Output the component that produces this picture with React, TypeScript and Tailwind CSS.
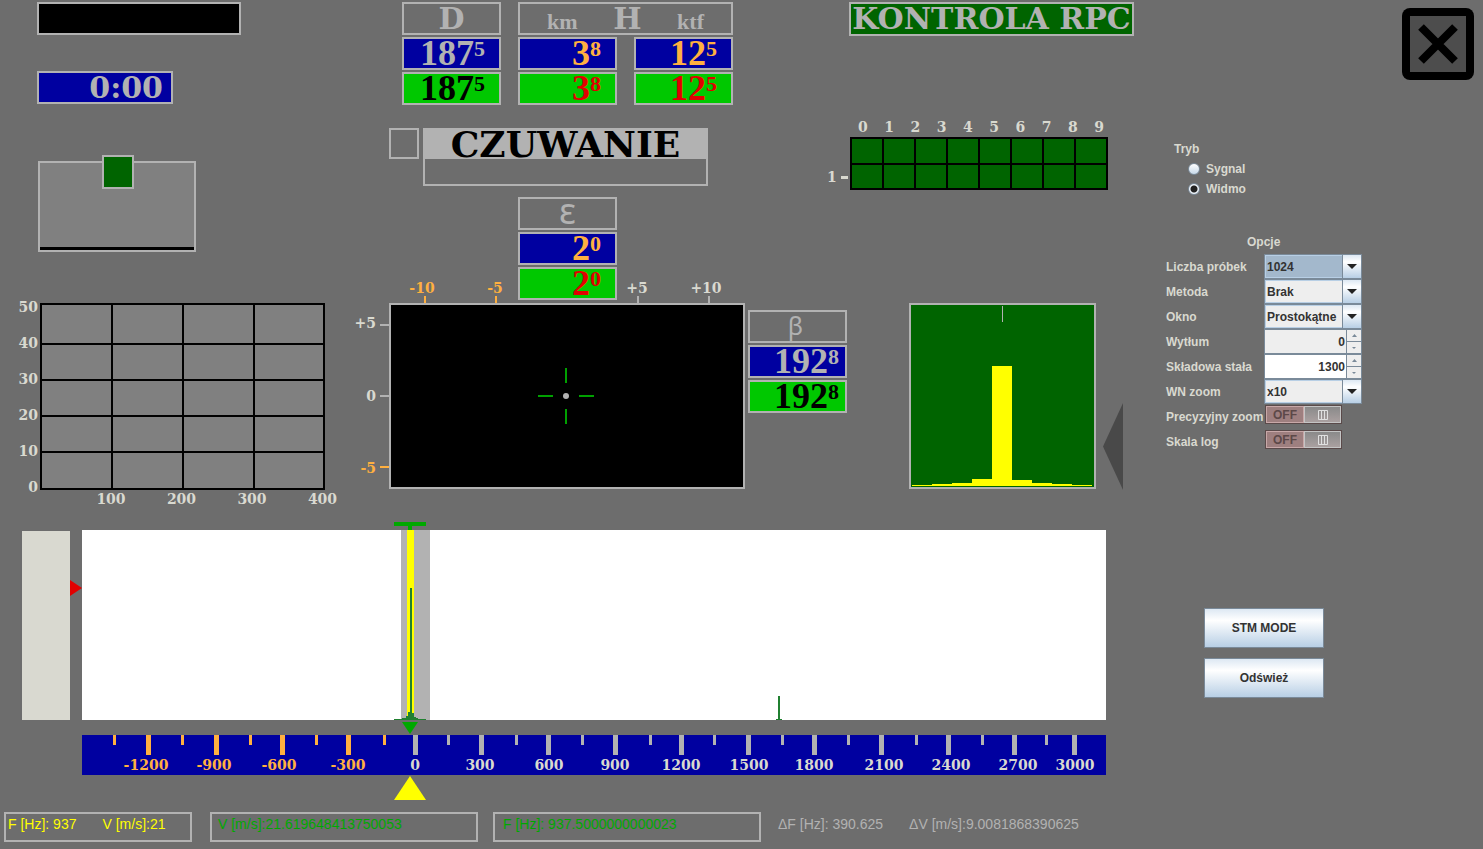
import React, { useState } from "react";

const display = "font-['DejaVu_Serif',serif] font-bold";
const digits = "font-['Liberation_Serif',serif] font-bold";

type Tone = "blueGray" | "blueOrange" | "greenBlack" | "greenRed";

const tones: Record<Tone, string> = {
  blueGray: "bg-[#0000a0] text-[#b2b2b2]",
  blueOrange: "bg-[#0000a0] text-[#ffb040]",
  greenBlack: "bg-[#00c800] text-black",
  greenRed: "bg-[#00c800] text-[#e10000]",
};

function Readout({ value, fraction, tone, pad = "pr-3.5" }: { value: string; fraction: string; tone: Tone; pad?: string }) {
  return (
    <div className={`${digits} ${tones[tone]} ${pad} flex h-[33px] w-[99px] items-start justify-end border-2 border-[#b2b2b2]`}>
      <span className="text-[36px] leading-[29px]">{value}</span>
      <span className="text-[22px] leading-5">{fraction}</span>
    </div>
  );
}

function Header({ children }: { children: React.ReactNode }) {
  return (
    <div className="flex h-[33px] w-[99px] items-start justify-center border-2 border-[#b2b2b2] text-[#b2b2b2]">
      {children}
    </div>
  );
}

function RangeChart() {
  return (
    <svg width="359" height="206" className={`${display} shrink-0 overflow-visible text-[14px]`} fill="#d9d9d0">
      <rect x="41" y="1" width="283" height="185" fill="#808080" stroke="#000" strokeWidth="2" />
      {[41, 77, 113, 149].map((y) => (
        <rect key={y} x="41" y={y - 1} width="283" height="2" fill="#000" />
      ))}
      {[112, 183, 254].map((x) => (
        <rect key={x} x={x - 1} y="1" width="2" height="185" fill="#000" />
      ))}
      {[50, 40, 30, 20, 10, 0].map((v, i) => (
        <text key={v} x="38" y={9 + i * 36} textAnchor="end">{v}</text>
      ))}
      {[100, 200, 300, 400].map((v, i) => (
        <text key={v} x={111 + i * 70.5} y="201" textAnchor="middle">{v}</text>
      ))}
    </svg>
  );
}

function Scope() {
  return (
    <svg width="388" height="186" className={`${display} shrink-0 overflow-visible text-[14px]`}>
      <text x="17" y="25" textAnchor="end" fill="#d9d9d0">+5</text>
      <text x="17" y="98" textAnchor="end" fill="#d9d9d0">0</text>
      <text x="17" y="170" textAnchor="end" fill="#ffb040">-5</text>
      <rect x="21" y="21" width="10" height="2" fill="#b2b2b2" />
      <rect x="21" y="92" width="10" height="2" fill="#b2b2b2" />
      <rect x="21" y="163" width="10" height="2" fill="#ffb040" />
      <rect x="31" y="1" width="354" height="184" fill="#000" stroke="#b2b2b2" strokeWidth="2" />
      <g fill="#00a000">
        <rect x="206" y="65" width="2" height="15" />
        <rect x="206" y="106" width="2" height="15" />
        <rect x="179" y="92" width="15" height="2" />
        <rect x="220" y="92" width="15" height="2" />
      </g>
      <circle cx="207" cy="93" r="3" fill="#b2b2b2" />
    </svg>
  );
}

function Histogram() {
  const bars = [1, 2, 3, 7, 120, 6, 3, 2, 1];
  return (
    <svg width="187" height="186" className="shrink-0" shapeRendering="crispEdges">
      <rect x="1" y="1" width="185" height="184" fill="#006400" stroke="#b2b2b2" strokeWidth="2" />
      <rect x="93" y="3" width="1" height="16" fill="#b2b2b2" />
      {bars.map((h, i) => (
        <rect key={i} x={3 + i * 20} y={183 - h} width="20" height={h} fill="#ff0" />
      ))}
    </svg>
  );
}

const major: [number, string, number][] = [
  [66, "-1200", 64], [134, "-900", 132], [200, "-600", 197], [266, "-300", 266],
  [333, "0", 333], [399, "300", 398], [466, "600", 467], [533, "900", 533],
  [599, "1200", 599], [666, "1500", 667], [732, "1800", 732], [799, "2100", 802],
  [866, "2400", 869], [932, "2700", 936], [992, "3000", 993],
];
const minor = [32, 100, 168, 234, 302, 366, 434, 500, 568, 632, 700, 766, 834, 900, 964];
const pct = (x: number) => `${(x / 1024) * 100}%`;

function Spectrum() {
  return (
    <svg height="280" className={`${display} w-0 min-w-0 flex-1 text-[14px]`}>
      <rect y="10" width="100%" height="190" fill="#fff" />
      <svg x={pct(312)} width="48" height="280" overflow="visible">
        <rect x="7" y="10" width="29" height="190" fill="#b2b2b2" />
        <rect x="13" y="10" width="7" height="190" fill="#ff0" />
        <rect x="0" y="2" width="32" height="4" fill="#00a800" />
        <rect x="14" y="6" width="4" height="4" fill="#00a800" />
        <path d="M16 68h2v125h2v4h2v1h2v1h8v1H0v-1h8v-1h4v-2h2v-4h2z" fill="#208030" />
        <path d="M8 202h16l-8 12z" fill="#00a800" />
      </svg>
      <rect x={pct(696)} y="176" width="2" height="24" fill="#208030" />
      <rect x={pct(694)} y="199" width="6" height="1" fill="#208030" />
      <rect y="215" width="100%" height="40" fill="#0000a0" />
      {minor.map((x) => (
        <rect key={x} x={pct(x - 1)} y="215" width="3" height="10" fill={x < 330 ? "#ffb040" : "#b2b2b2"} />
      ))}
      {major.map(([x, label, cx]) => (
        <g key={label}>
          <rect x={pct(x - 2)} y="215" width="5" height="20" fill={x < 330 ? "#ffb040" : "#b2b2b2"} />
          <text x={pct(cx)} y="250" textAnchor="middle" fill={x < 330 ? "#ffb040" : "#d9d9d0"}>{label}</text>
        </g>
      ))}
      <svg x={pct(312)} y="256" width="32" height="24">
        <path d="M16 0l16 24H0z" fill="#ff0" />
      </svg>
    </svg>
  );
}

function Combo({ id, options, active = false }: { id: string; options: string[]; active?: boolean }) {
  return (
    <div className="relative h-[25px] w-[98px]">
      <select
        id={id}
        className={`h-full w-full appearance-none rounded-none border border-[#7a8a99] pl-0.5 pr-5 text-xs font-bold text-[#333] outline-none ring-1 ring-inset ring-[#b8cfe5] ${active ? "bg-[#a3b8cc]" : "bg-[#eee]"}`}
      >
        {options.map((o) => (
          <option key={o}>{o}</option>
        ))}
      </select>
      <span className="pointer-events-none absolute inset-y-px right-px flex w-[19px] items-center justify-center border-l border-[#7a8a99] bg-linear-to-b from-[#dde8f3] via-white via-30% to-[#b8cfe5]">
        <svg width="10" height="5"><path d="M0 0h10L5 5z" fill="#222" /></svg>
      </span>
    </div>
  );
}

function Spinner({ id, initial, bg }: { id: string; initial: number; bg: string }) {
  const [value, setValue] = useState(initial);
  const step = "flex flex-1 items-center justify-center bg-[#eee]";
  return (
    <div className="flex h-[25px] w-[98px] border border-[#7a8a99] bg-[#7a8a99]">
      <input
        id={id}
        value={value}
        onChange={(e) => setValue(Number(e.target.value) || 0)}
        className={`w-0 min-w-0 flex-1 pr-px text-right text-xs font-bold text-[#333] outline-none ${bg}`}
      />
      <div className="ml-px flex w-3.5 flex-col gap-px">
        <button type="button" aria-label="+" className={step} onClick={() => setValue(value + 1)}>
          <svg width="5" height="3"><path d="M0 3h5L2.5 0z" fill="#7a8a99" /></svg>
        </button>
        <button type="button" aria-label="−" className={step} onClick={() => setValue(value - 1)}>
          <svg width="4" height="2"><path d="M0 0h4L2 2z" fill="#7a8a99" /></svg>
        </button>
      </div>
    </div>
  );
}

function Toggle({ id }: { id: string }) {
  const [on, setOn] = useState(false);
  return (
    <button
      id={id}
      type="button"
      role="switch"
      aria-checked={on}
      onClick={() => setOn(!on)}
      className={`mb-1 ml-px flex h-[19px] w-[77px] border border-[#5a4a4a] ${on ? "flex-row-reverse" : ""}`}
    >
      <span className="flex h-full w-[38px] items-center justify-center border border-[#c8a8a8] bg-[#9e7f7f] text-xs font-bold text-[#5c4848]">
        {on ? "ON" : "OFF"}
      </span>
      <span className="flex h-full flex-1 items-center justify-center border border-[#c4c4c4] bg-linear-to-b from-[#8a8a8a] to-[#aaa0a0]">
        <svg width="10" height="10" fill="none" stroke="#e0e0e0"><path d="M.5 .5h9v9h-9zM3.5 0v10M6.5 0v10" /></svg>
      </span>
    </button>
  );
}

function Row({ id, label, children }: { id: string; label: string; children: React.ReactNode }) {
  return (
    <div className="flex h-[25px] items-center">
      <label htmlFor={id} className="w-[98px] shrink-0 whitespace-nowrap">{label}</label>
      {children}
    </div>
  );
}

function Aside() {
  const [mode, setMode] = useState("Widmo");
  const action =
    "h-10 w-[120px] border border-[#7a8a99] bg-linear-to-b from-[#dde8f3] via-white via-30% to-[#b8cfe5] text-xs font-bold text-[#333]";
  return (
    <aside className="flex w-[343px] shrink-0 flex-col pt-2 font-['Liberation_Sans',sans-serif] text-xs font-bold text-[#d9d9d0]">
      <button type="button" aria-label="Zamknij" className="mr-[9px] flex size-[72px] items-center justify-center self-end rounded-lg bg-black p-2">
        <svg width="56" height="56">
          <rect width="56" height="56" fill="#4d4d4d" />
          <path d="M11 11l34 34M45 11L11 45" stroke="#000" strokeWidth="8" />
        </svg>
      </button>
      <div role="radiogroup" aria-label="Tryb" className="mt-[59px] pl-[34px] leading-5">
        <p>Tryb</p>
        {["Sygnal", "Widmo"].map((m) => (
          <label key={m} className="flex items-center gap-1.5 pl-3.5">
            <input
              type="radio"
              name="mode"
              checked={mode === m}
              onChange={() => setMode(m)}
              className="size-3 appearance-none rounded-full border border-[#7a8a99] bg-linear-to-b from-white to-[#c8daea] checked:bg-[radial-gradient(circle,#222_0_3px,#eef4fa_4px)]"
            />
            {m}
          </label>
        ))}
      </div>
      <div className="mt-8 pl-[26px]">
        <p className="mb-px pl-[81px] leading-[22px]">Opcje</p>
        <Row id="samples" label="Liczba próbek"><Combo id="samples" options={["1024", "2048", "4096"]} active /></Row>
        <Row id="method" label="Metoda"><Combo id="method" options={["Brak"]} /></Row>
        <Row id="window" label="Okno"><Combo id="window" options={["Prostokątne", "Hanninga"]} /></Row>
        <Row id="damp" label="Wytłum"><Spinner id="damp" initial={0} bg="bg-[#eee]" /></Row>
        <Row id="offset" label="Składowa stała"><Spinner id="offset" initial={1300} bg="bg-white" /></Row>
        <Row id="zoom" label="WN zoom"><Combo id="zoom" options={["x10", "x20"]} /></Row>
        <Row id="precise" label="Precyzyjny zoom"><Toggle id="precise" /></Row>
        <Row id="log" label="Skala log"><Toggle id="log" /></Row>
      </div>
      <div className="mt-[154px] flex flex-col gap-2.5 pl-16">
        <button type="button" className={action}>STM MODE</button>
        <button type="button" className={action}>Odśwież</button>
      </div>
    </aside>
  );
}

export default function App() {
  return (
    <div className="flex min-h-screen w-full bg-[#6d6d6d]">
      <main className="flex min-w-0 flex-1 flex-col">
        <section className="flex pt-0.5">
          <div className="flex w-[359px] shrink-0 flex-col pl-[37px]">
            <div className="h-[33px] w-[204px] border-2 border-[#b2b2b2] bg-black" />
            <div className={`${display} mt-9 h-[33px] w-[136px] border-2 border-[#b2b2b2] bg-[#0000a0] pr-2 text-right text-[30px] leading-[29px] text-[#b2b2b2]`}>
              0:00
            </div>
            <div className="relative ml-px mt-[57px] flex h-[91px] w-[158px] flex-col justify-end border-2 border-[#b2b2b2] bg-[#808080]">
              <div className="absolute -top-2 left-[62px] h-[34px] w-8 border-2 border-[#b2b2b2] bg-[#006400]" />
              <div className="h-[3px] bg-black" />
            </div>
          </div>

          <div className="flex w-[468px] shrink-0 flex-col">
            <div className="flex gap-[17px] pl-[43px]">
              <div className="flex flex-col gap-0.5">
                <Header><span className={`${display} text-[30px] leading-[29px]`}>D</span></Header>
                <Readout value="187" fraction="5" tone="blueGray" />
                <Readout value="187" fraction="5" tone="greenBlack" />
              </div>
              <div className="flex flex-col gap-0.5">
                <div className="flex h-[33px] w-[215px] items-baseline justify-between border-2 border-[#b2b2b2] px-[27px] text-[#b2b2b2]">
                  <span className={`${digits} text-[22px] leading-[29px]`}>km</span>
                  <span className={`${display} text-[30px] leading-[29px]`}>H</span>
                  <span className={`${digits} text-[22px] leading-[29px]`}>ktf</span>
                </div>
                <div className="flex gap-[17px]">
                  <Readout value="3" fraction="8" tone="blueOrange" />
                  <Readout value="12" fraction="5" tone="blueOrange" />
                </div>
                <div className="flex gap-[17px]">
                  <Readout value="3" fraction="8" tone="greenRed" />
                  <Readout value="12" fraction="5" tone="greenRed" />
                </div>
              </div>
            </div>

            <div className="mt-[23px] flex items-start gap-1 pl-[30px]">
              <div className="h-[31px] w-[30px] border-2 border-[#b2b2b2]" />
              <div className="h-[58px] w-[285px] border-2 border-[#b2b2b2]">
                <div className={`${display} h-[29px] bg-[#b2b2b2] text-center text-[36px] leading-[29px] text-black`}>CZUWANIE</div>
              </div>
            </div>

            <div className="mt-[11px] flex items-end pl-[30px]">
              <svg width="129" height="24" className={`${display} text-[14px]`} fill="#ffb040">
                <text x="33" y="14" textAnchor="middle">-10</text>
                <text x="106" y="14" textAnchor="middle">-5</text>
                <rect x="35" y="17" width="2" height="7" />
                <rect x="106" y="17" width="2" height="7" />
              </svg>
              <div className="mb-[3px] flex flex-col gap-0.5">
                <Header><span className="font-['Noto_Sans',sans-serif] text-[36px] leading-[24px]">ε</span></Header>
                <Readout value="2" fraction="0" tone="blueOrange" />
                <Readout value="2" fraction="0" tone="greenRed" />
              </div>
              <svg width="128" height="24" className={`${display} text-[14px]`} fill="#d9d9d0">
                <text x="20" y="14" textAnchor="middle">+5</text>
                <text x="89" y="14" textAnchor="middle">+10</text>
                <rect x="20" y="17" width="2" height="7" fill="#b2b2b2" />
                <rect x="91" y="17" width="2" height="7" fill="#b2b2b2" />
              </svg>
            </div>
          </div>

          <div className="flex flex-col">
            <div className={`${display} ml-[22px] h-[34px] w-[285px] whitespace-nowrap border-2 border-[#b2b2b2] bg-[#006400] text-center text-[30px] leading-[30px] text-[#b2b2b2]`}>
              KONTROLA RPC
            </div>
            <div className={`${display} ml-[31px] mt-[81px] flex w-[246px] justify-between text-[14px] leading-5 text-[#d9d9d0]`}>
              {[0, 1, 2, 3, 4, 5, 6, 7, 8, 9].map((n) => (
                <span key={n}>{n}</span>
              ))}
            </div>
            <div className="flex items-end">
              <div className={`${display} flex w-[23px] items-center gap-1 text-[14px] leading-[25px] text-[#d9d9d0]`}>
                1<span className="h-[3px] w-[7px] bg-[#d9d9d0]" />
              </div>
              <div className="grid h-[53px] w-[258px] grid-cols-8 grid-rows-[24px_23px] gap-0.5 bg-black p-0.5">
                {Array.from({ length: 16 }, (_, i) => (
                  <div key={i} className="bg-[#006400]" />
                ))}
              </div>
            </div>
          </div>
        </section>

        <section className="flex">
          <RangeChart />
          <Scope />
          <div className="ml-px mt-[7px] flex flex-col gap-0.5">
            <Header><span className="pr-1 font-['Noto_Sans',sans-serif] text-[25px] leading-[27px]">β</span></Header>
            <Readout value="192" fraction="8" tone="blueGray" pad="pr-1.5" />
            <Readout value="192" fraction="8" tone="greenBlack" pad="pr-1.5" />
          </div>
          <div className="ml-[62px] flex gap-[7px]">
            <Histogram />
            <svg width="20" height="87" className="mt-[100px]"><path d="M20 0v87L0 43.5z" fill="#494949" /></svg>
          </div>
        </section>

        <section className="mt-[11px] flex items-start pl-[22px] pr-[34px]">
          <div className="mt-[11px] h-[189px] w-12 bg-[#d9d9d0]" />
          <svg width="12" height="16" className="mt-[60px]"><path d="M0 0l12 8L0 16z" fill="#e10000" /></svg>
          <Spectrum />
        </section>

        <footer className="mt-3 flex whitespace-nowrap pl-1 font-['Liberation_Sans',sans-serif] text-sm leading-5">
          <div className="flex h-[30px] w-[188px] gap-[26px] border-2 border-[#b2b2b2] pl-0.5 text-[#ff0]">
            <span>F [Hz]: 937</span>
            <span>V [m/s]:21</span>
          </div>
          <div className="ml-[18px] h-[30px] w-[268px] border-2 border-[#b2b2b2] pl-1.5 text-[#00a800]">V [m/s]:21.619648413750053</div>
          <div className="ml-[15px] h-[30px] w-[268px] border-2 border-[#b2b2b2] pl-2 text-[#00a800]">F [Hz]: 937.5000000000023</div>
          <div className="ml-[17px] flex gap-[26px] pt-0.5 text-[#b2b2b2]">
            <span>ΔF [Hz]: 390.625</span>
            <span>ΔV [m/s]:9.0081868390625</span>
          </div>
        </footer>
      </main>
      <Aside />
    </div>
  );
}
